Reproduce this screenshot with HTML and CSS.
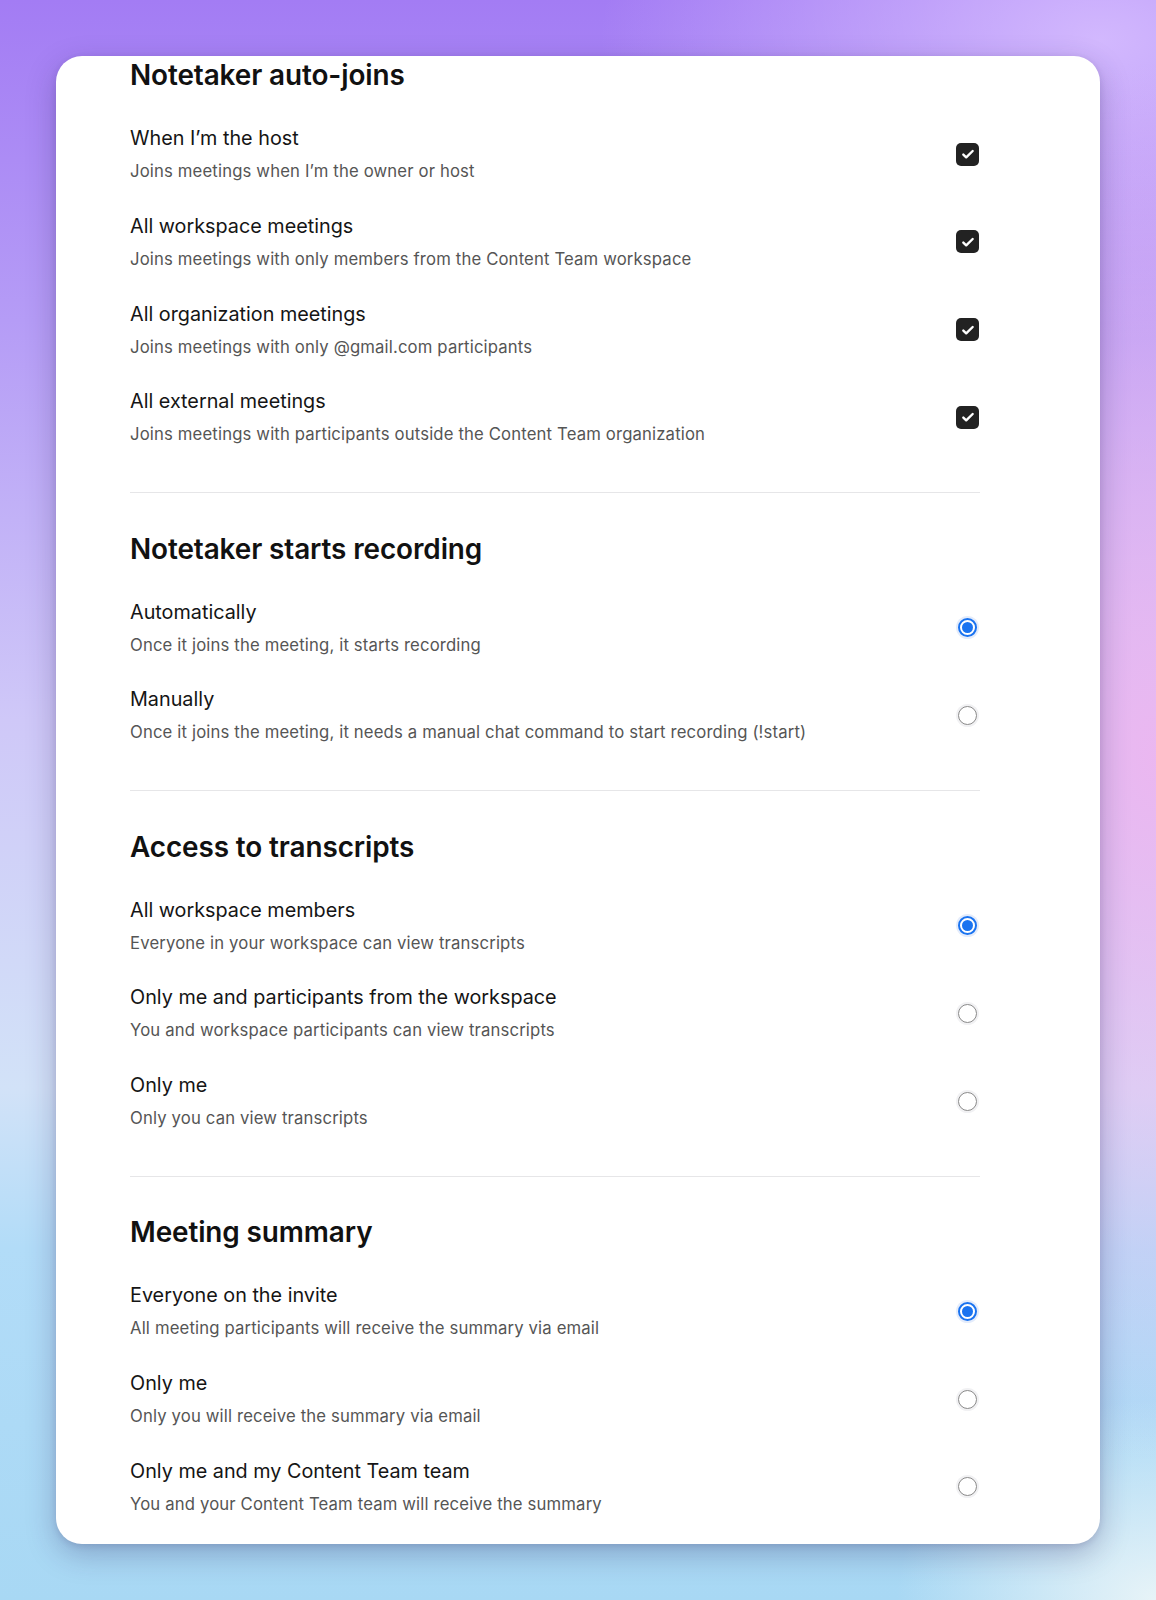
FILE: index.html
```html
<!DOCTYPE html>
<html>
<head>
<meta charset="utf-8">
<link rel="stylesheet" href="styles.css">
</head>
<body>
<div class="page">
  <div class="card">
    <section class="section first">
      <h2 class="heading">Notetaker auto-joins</h2>
      <div class="rows">
        <div class="row"><div class="text"><div class="title">When I’m the host</div><div class="desc">Joins meetings when I’m the owner or host</div></div><span class="check"><svg viewBox="0 0 24 24" width="16" height="16"><path d="M5 12.8l4.3 4.2L19 7.5" fill="none" stroke="#fff" stroke-width="3.6" stroke-linecap="round" stroke-linejoin="round"/></svg></span></div>
        <div class="row"><div class="text"><div class="title">All workspace meetings</div><div class="desc">Joins meetings with only members from the Content Team workspace</div></div><span class="check"><svg viewBox="0 0 24 24" width="16" height="16"><path d="M5 12.8l4.3 4.2L19 7.5" fill="none" stroke="#fff" stroke-width="3.6" stroke-linecap="round" stroke-linejoin="round"/></svg></span></div>
        <div class="row"><div class="text"><div class="title">All organization meetings</div><div class="desc">Joins meetings with only @gmail.com participants</div></div><span class="check"><svg viewBox="0 0 24 24" width="16" height="16"><path d="M5 12.8l4.3 4.2L19 7.5" fill="none" stroke="#fff" stroke-width="3.6" stroke-linecap="round" stroke-linejoin="round"/></svg></span></div>
        <div class="row"><div class="text"><div class="title">All external meetings</div><div class="desc">Joins meetings with participants outside the Content Team organization</div></div><span class="check"><svg viewBox="0 0 24 24" width="16" height="16"><path d="M5 12.8l4.3 4.2L19 7.5" fill="none" stroke="#fff" stroke-width="3.6" stroke-linecap="round" stroke-linejoin="round"/></svg></span></div>
      </div>
    </section>
    <section class="section">
      <h2 class="heading">Notetaker starts recording</h2>
      <div class="rows">
        <div class="row"><div class="text"><div class="title">Automatically</div><div class="desc">Once it joins the meeting, it starts recording</div></div><span class="radio on"></span></div>
        <div class="row"><div class="text"><div class="title">Manually</div><div class="desc">Once it joins the meeting, it needs a manual chat command to start recording (!start)</div></div><span class="radio"></span></div>
      </div>
    </section>
    <section class="section">
      <h2 class="heading">Access to transcripts</h2>
      <div class="rows">
        <div class="row"><div class="text"><div class="title">All workspace members</div><div class="desc">Everyone in your workspace can view transcripts</div></div><span class="radio on"></span></div>
        <div class="row"><div class="text"><div class="title">Only me and participants from the workspace</div><div class="desc">You and workspace participants can view transcripts</div></div><span class="radio"></span></div>
        <div class="row"><div class="text"><div class="title">Only me</div><div class="desc">Only you can view transcripts</div></div><span class="radio"></span></div>
      </div>
    </section>
    <section class="section last">
      <h2 class="heading">Meeting summary</h2>
      <div class="rows">
        <div class="row"><div class="text"><div class="title">Everyone on the invite</div><div class="desc">All meeting participants will receive the summary via email</div></div><span class="radio on"></span></div>
        <div class="row"><div class="text"><div class="title">Only me</div><div class="desc">Only you will receive the summary via email</div></div><span class="radio"></span></div>
        <div class="row"><div class="text"><div class="title">Only me and my Content Team team</div><div class="desc">You and your Content Team team will receive the summary</div></div><span class="radio"></span></div>
      </div>
    </section>
  </div>
</div>
</body>
</html>
```
FILE: styles.css
```css
* { box-sizing: border-box; }
html, body { margin: 0; padding: 0; }
body {
  width: 1156px;
  height: 1600px;
  overflow: hidden;
  font-family: Inter, "Noto Sans", sans-serif;
  background:
    radial-gradient(ellipse 420px 700px at 1156px 760px, rgba(236, 182, 240, 0.95), rgba(236, 182, 240, 0) 100%),
    radial-gradient(ellipse 500px 300px at 1100px 40px, rgba(215, 190, 255, 0.9), rgba(215, 190, 255, 0) 100%),
    radial-gradient(ellipse 260px 200px at 1156px 1600px, rgba(235, 245, 248, 0.95), rgba(235, 245, 248, 0) 100%),
    linear-gradient(180deg, #a37cf4 0%, #b59cf6 20%, #cfc8f8 45%, #d2e2f8 68%, #b2dcf8 78%, #a8d8f4 100%);
}
.page {
  padding: 56px 56px 0 56px;
}
.card {
  width: 1044px;
  height: 1488px;
  background: #fff;
  border-radius: 26px;
  box-shadow: 0 10px 30px rgba(40, 30, 90, 0.28), 0 2px 6px rgba(40, 30, 90, 0.12);
  padding: 0 120px 0 74px;
  overflow: hidden;
}
.section {
  padding: 39.2px 0 47px;
  border-bottom: 1px solid #e6e6e8;
}
.section.first { padding-top: 3px; }
.section.last { border-bottom: none; padding-bottom: 30px; }
.heading {
  margin: 0;
  font-size: 27.9px;
  line-height: 32px;
  font-weight: 600;
  color: #111;
  letter-spacing: -0.1px;
}
.rows {
  display: flex;
  flex-direction: column;
  gap: 31.8px;
  margin-top: 35px;
}
.row {
  display: flex;
  align-items: center;
  justify-content: space-between;
}
.text {
  display: flex;
  flex-direction: column;
  gap: 10px;
}
.title {
  font-size: 19.8px;
  line-height: 24px;
  color: #151515;
}
.desc {
  font-size: 16.7px;
  line-height: 22px;
  color: #555;
  letter-spacing: 0.15px;
}
.check {
  width: 23px;
  height: 23px;
  border-radius: 5px;
  background: #222;
  display: flex;
  align-items: center;
  justify-content: center;
  margin-right: 1px;
}
.radio {
  width: 19px;
  height: 19px;
  border-radius: 50%;
  border: 1.5px solid #8a8a8a;
  box-shadow: 0 0 0 2px #f1f1f3;
  margin-right: 3px;
  position: relative;
  background: #fff;
}
.radio.on {
  border: 2px solid #1a73f0;
  box-shadow: 0 0 0 2px #e4ecfb;
}
.radio.on::after {
  content: "";
  position: absolute;
  left: 2px;
  top: 2px;
  width: 11px;
  height: 11px;
  border-radius: 50%;
  background: #1a73f0;
}
```
